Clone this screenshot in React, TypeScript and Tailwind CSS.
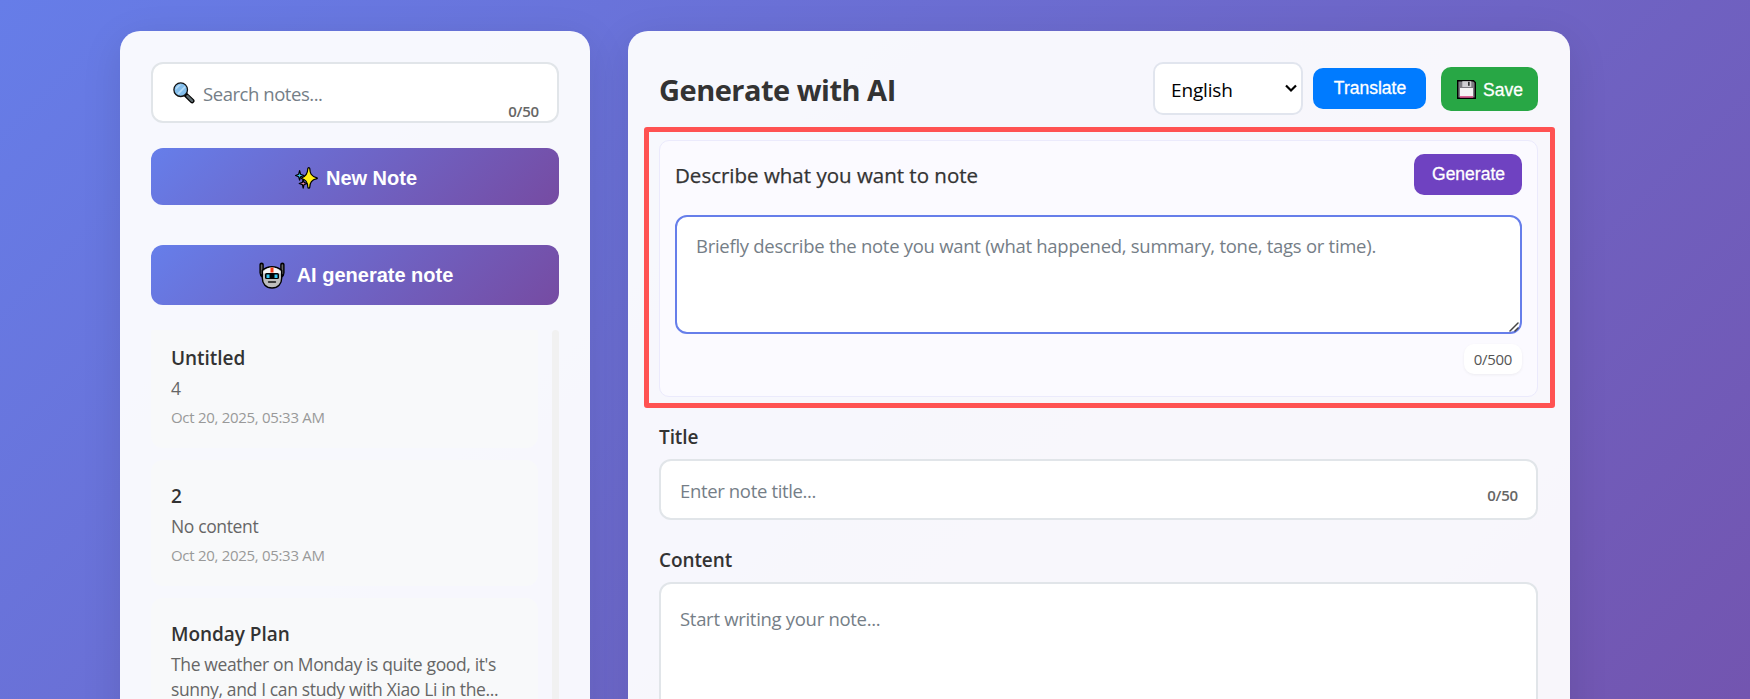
import React from "react";

const notes = [
  { title: "Untitled", body: ["4"], date: "Oct 20, 2025, 05:33 AM" },
  { title: "2", body: ["No content"], date: "Oct 20, 2025, 05:33 AM" },
  {
    title: "Monday Plan",
    body: ["The weather on Monday is quite good, it's", "sunny, and I can study with Xiao Li in the..."],
    date: "",
  },
];

function SearchIcon() {
  return (
    <svg width="22" height="22" viewBox="0 0 22 22" className="shrink-0">
      <path d="M12.8 12.8 19.2 19" stroke="#000" strokeWidth="4.6" strokeLinecap="round" />
      <path d="M14.4 14.2 19.1 18.8" stroke="#5e6b70" strokeWidth="2.4" strokeLinecap="round" />
      <circle cx="7.7" cy="7.7" r="6.8" fill="#83beec" stroke="#111" strokeWidth="1.3" />
      <path d="M2.5 8.2 8.4 2.4A5.5 5.5 0 0 0 2.5 8.2ZM4.2 11.6 11.7 4l1 1.2-7.2 7.5Z" fill="#b4dbf7" />
    </svg>
  );
}

function SparklesIcon() {
  return (
    <svg width="23" height="22" viewBox="0 0 23 22" className="shrink-0" stroke="#000" strokeWidth="1.2" strokeLinejoin="round">
      <path d="M4.6 3.6 5.6 7.3 8.9 8.5 5.6 9.7 4.6 13.2 3.6 9.7.6 8.5 3.6 7.3Z" fill="#3fc8ed" />
      <path d="M8.2 12 9 15.4 12 16.5 9 17.6 8.2 21.2 7.4 17.6 4.2 16.5 7.4 15.4Z" fill="#f18bb0" />
      <path d="M13.8.7C14.3.7 14.7 1 14.8 1.7 15 6 15.8 9.2 22 10.8c.5.2.5.7 0 .9-5.5 1.300-7 3.500-7.200 8.400-.1 1.400-1.900 1.400-2 0-.2-4.900-1.500-7.200-6-8.400-.5-.2-.5-.7 0-.9C11.300 9.200 12.600 6 12.800 1.700c.1-.7.5-1 1-1Z" fill="#ffed16" />
    </svg>
  );
}

function RobotIcon() {
  return (
    <svg width="26" height="27" viewBox="0 0 26 27" className="shrink-0">
      <path d="M2.600 2.600v8.200q0 2 1.700 3M23.400 2.600v8.200q0 2-1.700 3" fill="none" stroke="#000" strokeWidth="4.400" strokeLinecap="round" />
      <path d="M2.600 3v8.500M23.400 3v8.500" stroke="#666" strokeWidth="1.600" strokeLinecap="round" />
      <path d="M3.300 8.500Q7 4.700 13 4.700t9.700 3.800v7.500c0 6-3.700 10-9.700 10s-9.700-4-9.700-10Z" fill="#bdbdbd" stroke="#000" strokeWidth="1.400" />
      <path d="M4.500 9.500Q8 5.500 13 5.500t8.500 4v2h-17Z" fill="#f3f3f3" />
      <path d="M11.500 5.500h3v5h-3Z" fill="#f03a17" />
      <rect x="6" y="11" width="14" height="6" rx="1.500" fill="#000" />
      <path d="M7.500 12.500h3v3.500h-3ZM15.500 12.500h3v3.500h-3Z" fill="#35c8f2" />
      <path d="M9.500 20h7" stroke="#111" strokeWidth="1.300" strokeLinecap="round" />
    </svg>
  );
}

function FloppyIcon() {
  return (
    <svg width="19" height="19" viewBox="0 0 19 19" className="shrink-0">
      <path d="M.7.700h15.800l1.800 1.800v15.800H.7Z" fill="#7c7a80" stroke="#000" strokeWidth="1.400" />
      <rect x="5.300" y="1.200" width="9" height="5.800" fill="#d0ced2" />
      <rect x="11" y="1.800" width="1.700" height="4" fill="#333" />
      <rect x="3" y="8" width="13" height="8.500" fill="#f5f3f4" />
      <rect x="3" y="16.200" width="13" height="1.500" fill="#e0508a" />
    </svg>
  );
}

export default function App() {
  return (
    <div className="h-[699px] w-[1750px] overflow-hidden bg-[linear-gradient(135deg,#667de8_0%,#764ba2_100%)] bg-[length:1750px_1300px] bg-no-repeat pl-[120px] pt-[31px] font-['Open_Sans','Noto_Sans',sans-serif] text-[#333]">
      <div className="flex h-[860px] gap-[38px]">
        <aside className="w-[470px] shrink-0 rounded-[20px] bg-white/95 p-[31px] shadow-[0_10px_40px_rgba(0,0,0,0.1)]">
          <div className="relative flex h-[61px] items-center rounded-xl border-2 border-[#e1e5e9] bg-white pl-[20px]">
            <SearchIcon />
            <input
              placeholder="Search notes..."
              className="ml-[8px] w-[250px] pt-[3px] text-[18.5px] tracking-[-0.45px] outline-none placeholder:text-[#757e87]"
            />
            <span className="absolute right-[18px] top-[35px] text-[15px] font-semibold leading-[24px] tracking-[-0.2px] text-[#666]">0/50</span>
          </div>
          <button className="mt-[25px] flex h-[57px] w-full items-center justify-center rounded-xl bg-[linear-gradient(135deg,#667eea_0%,#764ba2_100%)] pl-[2px] pt-[2px] font-['Liberation_Sans',sans-serif] text-[20px] font-bold text-white">
            <SparklesIcon />
            <span className="ml-[8px]">New Note</span>
          </button>
          <button className="mt-[40px] flex h-[60px] w-full items-center justify-center rounded-xl bg-[linear-gradient(135deg,#667eea_0%,#764ba2_100%)] pl-[2px] font-['Liberation_Sans',sans-serif] text-[20px] font-bold text-white">
            <RobotIcon />
            <span className="ml-[12px]">AI generate note</span>
          </button>
          <div className="mt-[25px] flex h-[500px] justify-between overflow-hidden">
            <ul className="-mt-2 flex w-[387px] flex-col gap-3">
              {notes.map((note) => (
                <li key={note.title} className="min-h-[126px] shrink-0 rounded-xl bg-[#f8f9fa] px-[20px] pt-[22px]">
                  <h3 className="text-[19px] font-semibold leading-[28px] tracking-[-0.05px]">{note.title}</h3>
                  <p className="mt-[4px] text-[17.5px] leading-[25px] tracking-[-0.36px] text-[#666]">
                    {note.body.map((line) => (
                      <span key={line} className="block whitespace-nowrap">{line}</span>
                    ))}
                  </p>
                  {note.date && <p className="mt-[5px] text-[15px] leading-[22px] tracking-[-0.3px] text-[#999]">{note.date}</p>}
                </li>
              ))}
            </ul>
            <div className="w-[7px] rounded-t-[4px] bg-[#f1f1f1]" />
          </div>
        </aside>

        <main className="relative w-[942px] shrink-0 rounded-[20px] bg-white/95 pl-[31px] pr-[32px] pt-[31px] shadow-[0_10px_40px_rgba(0,0,0,0.1)]">
          <header className="flex h-[53px] items-center">
            <h1 className="mr-auto pt-[2px] text-[29px] font-bold tracking-[-0.5px]">Generate with AI</h1>
            <div className="relative">
              <select className="block h-[53px] w-[150px] appearance-none rounded-[10px] border-2 border-[#e1e5ee] bg-white pl-[16px] pt-[4px] text-[19px] tracking-[-0.15px] text-black">
                <option>English</option>
              </select>
              <svg width="12" height="9" viewBox="0 0 12 9" className="pointer-events-none absolute right-[6px] top-[22px]">
                <path d="m1 1.500 5 5 5-5" fill="none" stroke="#000" strokeWidth="2.200" />
              </svg>
            </div>
            <button className="ml-[10px] h-[41px] w-[113px] rounded-[10px] bg-[#007bff] pb-[1px] pl-[1px] font-['Liberation_Sans',sans-serif] text-[17.5px] text-white [-webkit-text-stroke:0.3px_white]">
              Translate
            </button>
            <button className="ml-[15px] flex h-[44px] w-[97px] items-center justify-center gap-[7px] rounded-[10px] bg-[#28a745] pl-[1px] pt-[1px] font-['Liberation_Sans',sans-serif] text-[17.5px] text-white [-webkit-text-stroke:0.3px_white]">
              <FloppyIcon />
              <span className="pt-[2px]">Save</span>
            </button>
          </header>

          <section className="mt-[25px] h-[257px] w-[879px] rounded-[10px] border border-[#ebeafc] bg-[#fbfaff] px-[15px] pt-[13px]">
            <div className="flex h-[41px] items-center justify-between">
              <h2 className="pt-[2px] text-[20.5px] font-medium tracking-[0px] [-webkit-text-stroke:0.25px_#333]">Describe what you want to note</h2>
              <button className="h-[41px] w-[108px] rounded-[10px] bg-[#6f42c1] pb-[1px] pl-[1px] font-['Liberation_Sans',sans-serif] text-[17.5px] text-white [-webkit-text-stroke:0.3px_white]">
                Generate
              </button>
            </div>
            <div className="relative mt-[20px]">
              <textarea
                placeholder="Briefly describe the note you want (what happened, summary, tone, tags or time)."
                className="block h-[119px] w-[847px] resize-none rounded-xl border-2 border-[#667eea] bg-white px-[19px] pt-[15px] text-[18.5px] leading-[28px] tracking-[-0.28px] outline-none placeholder:text-[#757e87]"
              />
              <svg width="10" height="10" viewBox="0 0 10 10" className="absolute bottom-[2px] right-[3px]" stroke="#444" strokeWidth="1.500" strokeLinecap="round">
                <path d="M1 9 9 1M6 9 9 6" />
              </svg>
            </div>
            <div className="ml-auto mt-[10px] flex h-[30px] w-[58px] items-center justify-center rounded-[10px] bg-white text-[15px] tracking-[-0.3px] text-[#555] shadow-[0_1px_3px_rgba(0,0,0,0.06)]">
              0/500
            </div>
          </section>

          <label className="mt-[26px] block text-[19px] font-semibold leading-[28px] tracking-[-0.1px]">Title</label>
          <div className="mt-[8px] flex h-[61px] items-center justify-between rounded-xl border-2 border-[#e1e5e9] bg-white pl-[19px] pr-[18px]">
            <input
              placeholder="Enter note title..."
              className="w-[500px] pt-[3px] text-[18.5px] tracking-[-0.35px] outline-none placeholder:text-[#757e87]"
            />
            <span className="pt-[11px] text-[15px] font-semibold tracking-[-0.2px] text-[#666]">0/50</span>
          </div>
          <label className="mt-[26px] block text-[19px] font-semibold leading-[28px] tracking-[-0.1px]">Content</label>
          <textarea
            placeholder="Start writing your note..."
            className="mt-[8px] block h-[260px] w-full resize-none rounded-xl border-2 border-[#e1e5e9] bg-white px-[19px] pt-[20px] text-[18.5px] leading-[30px] tracking-[-0.3px] outline-none placeholder:text-[#757e87]"
          />
          <div className="pointer-events-none absolute left-[16px] top-[96px] h-[281px] w-[911px] rounded-[3px] border-[5px] border-[#ff5252]" />
        </main>
      </div>
    </div>
  );
}
